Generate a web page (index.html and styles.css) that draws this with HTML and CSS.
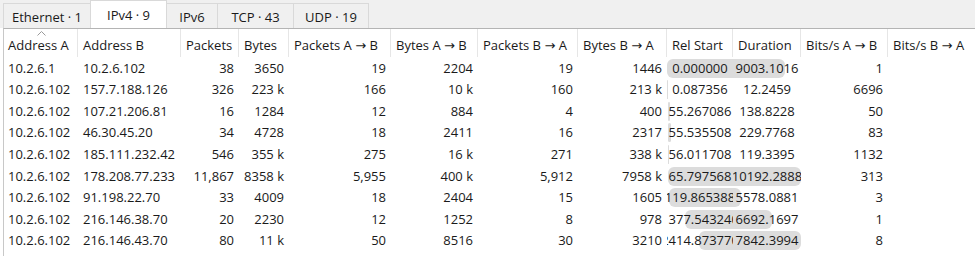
FILE: index.html
```html
<!DOCTYPE html>
<html>
<head>
<meta charset="utf-8">
<link rel="stylesheet" href="styles.css">
</head>
<body>
<div class="tabbar">
  <div class="tab tab-eth">Ethernet · 1</div>
  <div class="tab tab-ipv4 active">IPv4 · 9</div>
  <div class="tab tab-ipv6">IPv6</div>
  <div class="tab tab-tcp">TCP · 43</div>
  <div class="tab tab-udp">UDP · 19</div>
</div>
<div class="frame">
  <div class="row head">
    <div class="hc sorted">Address A<svg class="sort" width="9" height="5" viewBox="0 0 9 5"><polyline points="0.5,4.5 4.5,0.5 8.5,4.5" fill="none" stroke="#9a9a9a" stroke-width="1"/></svg></div>
    <div class="hc">Address B</div>
    <div class="hc">Packets</div>
    <div class="hc">Bytes</div>
    <div class="hc">Packets A → B</div>
    <div class="hc">Bytes A → B</div>
    <div class="hc">Packets B → A</div>
    <div class="hc">Bytes B → A</div>
    <div class="hc">Rel Start</div>
    <div class="hc">Duration</div>
    <div class="hc">Bits/s A → B</div>
    <div class="hc last">Bits/s B → A</div>
  </div>

  <div class="row">
    <div class="c">10.2.6.1</div><div class="c">10.2.6.102</div>
    <div class="c n">38</div><div class="c n">3650</div><div class="c n">19</div><div class="c n">2204</div><div class="c n">19</div><div class="c n">1446</div>
    <div class="tl"><div class="bar" style="margin-left:0%;width:87.77%"></div></div>
    <div class="c t rs"><span>0.000000</span></div><div class="c t du"><span>9003.1016</span></div>
    <div class="c n">1</div><div class="c"></div>
  </div>
  <div class="row">
    <div class="c">10.2.6.102</div><div class="c">157.7.188.126</div>
    <div class="c n">326</div><div class="c n">223 k</div><div class="c n">166</div><div class="c n">10 k</div><div class="c n">160</div><div class="c n">213 k</div>
    <div class="tl"><div class="bar" style="margin-left:0.001%;width:0.119%"></div></div>
    <div class="c t rs"><span>0.087356</span></div><div class="c t du"><span>12.2459</span></div>
    <div class="c n">6696</div><div class="c"></div>
  </div>
  <div class="row">
    <div class="c">10.2.6.102</div><div class="c">107.21.206.81</div>
    <div class="c n">16</div><div class="c n">1284</div><div class="c n">12</div><div class="c n">884</div><div class="c n">4</div><div class="c n">400</div>
    <div class="tl"><div class="bar" style="margin-left:0.539%;width:1.353%"></div></div>
    <div class="c t rs"><span>55.267086</span></div><div class="c t du"><span>138.8228</span></div>
    <div class="c n">50</div><div class="c"></div>
  </div>
  <div class="row">
    <div class="c">10.2.6.102</div><div class="c">46.30.45.20</div>
    <div class="c n">34</div><div class="c n">4728</div><div class="c n">18</div><div class="c n">2411</div><div class="c n">16</div><div class="c n">2317</div>
    <div class="tl"><div class="bar" style="margin-left:0.541%;width:2.240%"></div></div>
    <div class="c t rs"><span>55.535508</span></div><div class="c t du"><span>229.7768</span></div>
    <div class="c n">83</div><div class="c"></div>
  </div>
  <div class="row">
    <div class="c">10.2.6.102</div><div class="c">185.111.232.42</div>
    <div class="c n">546</div><div class="c n">355 k</div><div class="c n">275</div><div class="c n">16 k</div><div class="c n">271</div><div class="c n">338 k</div>
    <div class="tl"><div class="bar" style="margin-left:0.546%;width:1.163%"></div></div>
    <div class="c t rs"><span>56.011708</span></div><div class="c t du"><span>119.3395</span></div>
    <div class="c n">1132</div><div class="c"></div>
  </div>
  <div class="row">
    <div class="c">10.2.6.102</div><div class="c">178.208.77.233</div>
    <div class="c n">11,867</div><div class="c n">8358 k</div><div class="c n">5,955</div><div class="c n">400 k</div><div class="c n">5,912</div><div class="c n">7958 k</div>
    <div class="tl"><div class="bar" style="margin-left:0.641%;width:99.359%"></div></div>
    <div class="c t rs"><span>65.797568</span></div><div class="c t du"><span>10192.2888</span></div>
    <div class="c n">313</div><div class="c"></div>
  </div>
  <div class="row">
    <div class="c">10.2.6.102</div><div class="c">91.198.22.70</div>
    <div class="c n">33</div><div class="c n">4009</div><div class="c n">18</div><div class="c n">2404</div><div class="c n">15</div><div class="c n">1605</div>
    <div class="tl"><div class="bar" style="margin-left:1.169%;width:54.378%"></div></div>
    <div class="c t rs"><span>119.865388</span></div><div class="c t du"><span>5578.0881</span></div>
    <div class="c n">3</div><div class="c"></div>
  </div>
  <div class="row">
    <div class="c">10.2.6.102</div><div class="c">216.146.38.70</div>
    <div class="c n">20</div><div class="c n">2230</div><div class="c n">12</div><div class="c n">1252</div><div class="c n">8</div><div class="c n">978</div>
    <div class="tl"><div class="bar" style="margin-left:13.429%;width:65.239%"></div></div>
    <div class="c t rs"><span>1377.543240</span></div><div class="c t du"><span>6692.1697</span></div>
    <div class="c n">1</div><div class="c"></div>
  </div>
  <div class="row">
    <div class="c">10.2.6.102</div><div class="c">216.146.43.70</div>
    <div class="c n">80</div><div class="c n">11 k</div><div class="c n">50</div><div class="c n">8516</div><div class="c n">30</div><div class="c n">3210</div>
    <div class="tl"><div class="bar" style="margin-left:23.541%;width:76.459%"></div></div>
    <div class="c t rs"><span>2414.873770</span></div><div class="c t du"><span>7842.3994</span></div>
    <div class="c n">8</div><div class="c"></div>
  </div>
</div>
</body>
</html>
```

FILE: styles.css
```css
html, body {
  margin: 0;
  padding: 0;
  background: #ffffff;
  width: 975px;
  height: 256px;
  overflow: hidden;
}
body {
  font-family: "Open Sans", "Noto Sans", "DejaVu Sans", sans-serif;
  font-size: 13px;
  color: #1a1a1a;
}
.tabbar {
  display: flex;
  align-items: flex-end;
  height: 28px;
  padding-left: 3px;
  background: #f0f0f0;
}
.tab {
  box-sizing: border-box;
  height: 25px;
  display: flex;
  align-items: center;
  justify-content: center;
  border: 1px solid #d9d9d9;
  border-bottom: none;
  border-right: none;
  background: #f0f0f0;
  line-height: 18px;
  padding-top: 1px;
}
.tab.active {
  height: 28px;
  background: #ffffff;
  border-right: 1px solid #d9d9d9;
  padding-top: 0;
}
.tab.active + .tab { border-left: none; }
.tab-udp { border-right: 1px solid #d9d9d9; }
.tab-eth { width: 87px; }
.tab-ipv4 { width: 77px; }
.tab-ipv6 { width: 50px; }
.tab-tcp { width: 76px; }
.tab-udp { width: 76px; }

.frame {
  margin-left: 3px;
  border-left: 1px solid #c8c8c8;
  border-top: 1px solid #b4b4b4;
  height: 228px;
  background: #ffffff;
}
.row {
  display: grid;
  grid-template-columns: 74px 103px 58px 50px 102px 87px 100px 89px 66px 68px 87px 1fr;
  height: 21.55px;
  line-height: 18px;
  align-items: center;
}
.row.head {
  height: 28px;
  align-items: stretch;
}
.hc {
  position: relative;
  box-sizing: border-box;
  padding: 7px 5px 0 5px;
  border-right: 1px solid #e6e6e6;
  white-space: nowrap;
  overflow: hidden;
}
.hc.sorted { padding-left: 4px; }
.hc.last { border-right: none; }
.sort {
  position: absolute;
  left: 33px;
  top: 2px;
}
.c {
  grid-row: 1;
  padding: 0 5px;
  white-space: nowrap;
  overflow: hidden;
}
.row > .c:first-child { padding-left: 4px; }
.c.n { text-align: right; }
.c.t {
  display: flex;
  justify-content: center;
  padding: 0;
  position: relative;
}
.c.t span { flex: none; }
.rs { grid-column: 9; }
.du { grid-column: 10; }
.tl {
  grid-column: 9 / 11;
  grid-row: 1;
  align-self: stretch;
  display: flex;
  align-items: center;
  padding-top: 1px;
}
.bar {
  flex: none;
  height: 19px;
  min-width: 1px;
  background: #dcdcdc;
  border-radius: 6px;
}
```
